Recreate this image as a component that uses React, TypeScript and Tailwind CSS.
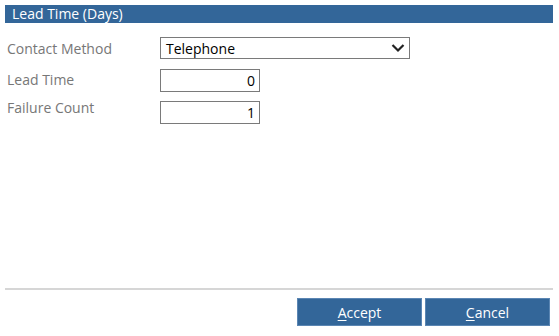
import React from "react";

export default function App() {
  const font = { fontFamily: '"Open Sans", "Noto Sans", sans-serif' };
  return (
    <div className="w-[559px] h-[336px] bg-white flex flex-col" style={font}>
      <div className="mx-[5px] mt-[5px] h-[18px] w-[548px] bg-[#336699] text-white text-[14px] leading-[18px] pl-[7px]">
        Lead Time (Days)
      </div>
      <div className="flex flex-col pl-[7px] pt-[14px] gap-[8px]">
        <div className="flex items-center h-[22px]">
          <div className="w-[153px] text-[14px] text-[#777777]">Contact Method</div>
          <div className="w-[250px] h-[22px] border border-[#7a7a7a] flex items-center justify-between pl-[5px] pr-[4px] text-[14px] text-black">
            <span>Telephone</span>
            <svg width="14" height="10" viewBox="0 0 14 10">
              <path d="M1.5 2 L7 7.5 L12.5 2" fill="none" stroke="#222" strokeWidth="2.2" />
            </svg>
          </div>
        </div>
        <div className="flex items-start h-[24px] mt-[2px]">
          <div className="w-[153px] text-[14px] text-[#777777] leading-[18px] mt-[2px]">Lead Time</div>
          <div className="w-[100px] h-[23px] border border-[#7a7a7a] flex items-center justify-end pr-[4px] text-[14px] text-black">0</div>
        </div>
        <div className="flex items-start h-[24px]">
          <div className="w-[153px] text-[14px] text-[#777777] leading-[18px] -mt-[2px]">Failure Count</div>
          <div className="w-[100px] h-[23px] border border-[#7a7a7a] flex items-center justify-end pr-[4px] text-[14px] text-black">1</div>
        </div>
      </div>
      <div className="flex-1" />
      <div className="mx-[5px] w-[548px] h-[2px] bg-[#d6d6d6]" />
      <div className="flex justify-end gap-[3px] pr-[9px] pt-[8px] pb-[10px]">
        <button className="w-[125px] h-[28px] bg-[#336699] text-white text-[14px] border border-[#5b86b3]">
          <span className="underline underline-offset-2">A</span>ccept
        </button>
        <button className="w-[125px] h-[28px] bg-[#336699] text-white text-[14px] border border-[#5b86b3]">
          <span className="underline underline-offset-2">C</span>ancel
        </button>
      </div>
    </div>
  );
}
